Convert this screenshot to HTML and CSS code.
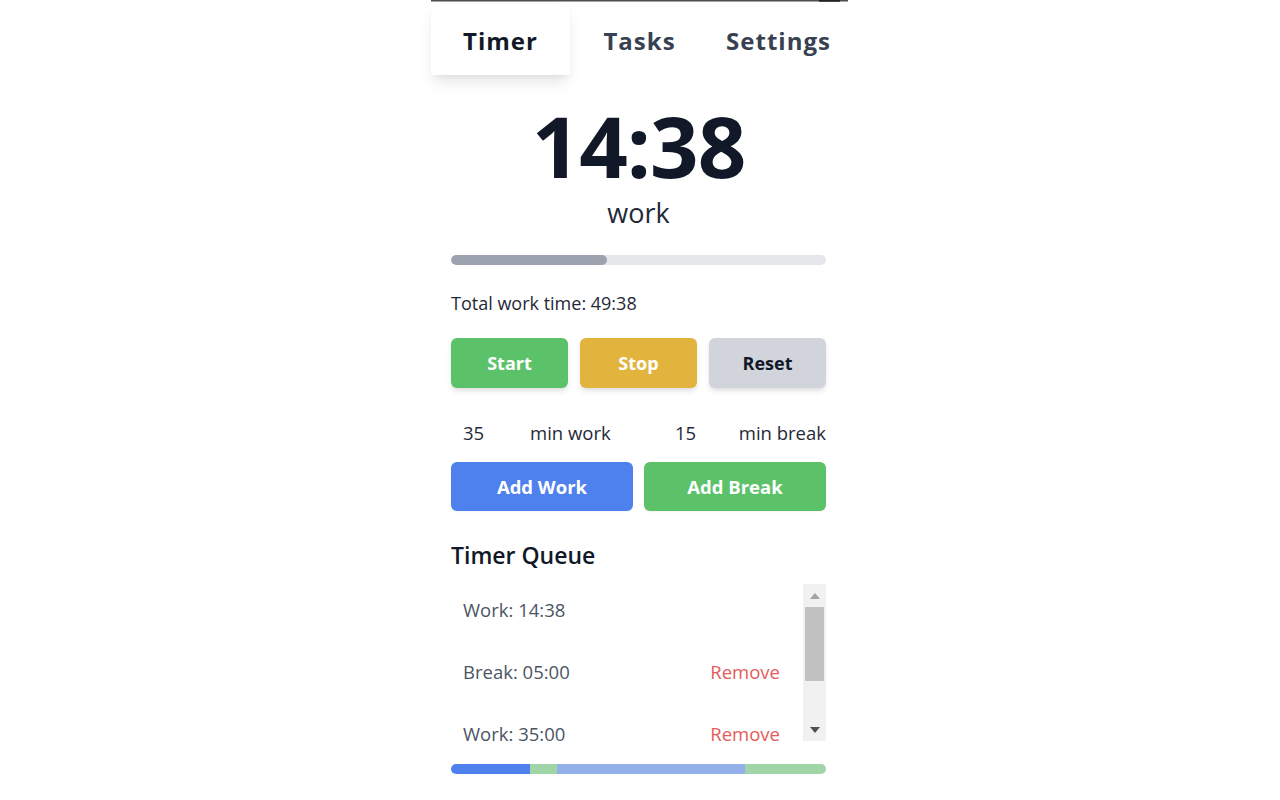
FILE: index.html
```html
<!DOCTYPE html>
<html lang="en">
<head>
<meta charset="utf-8">
<title>Pomodoro Timer</title>
<link rel="stylesheet" href="styles.css">
</head>
<body>
<div class="panel">
  <div class="topline"></div>
  <nav class="tabs">
    <div class="tab active">Timer</div>
    <div class="tab">Tasks</div>
    <div class="tab">Settings</div>
  </nav>
  <main class="content">
    <div class="clock">14:38</div>
    <div class="mode">work</div>
    <div class="progress"><div class="progress-fill" style="width:41.6%"></div></div>
    <div class="total">Total work time: 49:38</div>
    <div class="controls">
      <button class="btn btn-start">Start</button>
      <button class="btn btn-stop">Stop</button>
      <button class="btn btn-reset">Reset</button>
    </div>
    <div class="durations">
      <input class="num" type="number" value="35">
      <span class="dlabel">min work</span>
      <input class="num" type="number" value="15">
      <span class="dlabel">min break</span>
    </div>
    <div class="adds">
      <button class="btn btn-add btn-work">Add Work</button>
      <button class="btn btn-add btn-break">Add Break</button>
    </div>
    <h2 class="queue-title">Timer Queue</h2>
    <div class="queue">
      <ul class="queue-list">
        <li class="qitem"><span>Work: 14:38</span></li>
        <li class="qitem"><span>Break: 05:00</span><span class="remove">Remove</span></li>
        <li class="qitem"><span>Work: 35:00</span><span class="remove">Remove</span></li>
        <li class="qitem"><span>Break: 15:00</span><span class="remove">Remove</span></li>
      </ul>
      <div class="scrollbar">
        <svg class="arrow" width="10" height="6" viewBox="0 0 10 6"><path d="M0 6 L5 0 L10 6 Z" fill="#a3a3a3"/></svg>
        <div class="thumb"></div>
        <div class="track-rest"></div>
        <svg class="arrow" width="10" height="6" viewBox="0 0 10 6"><path d="M0 0 L10 0 L5 6 Z" fill="#505050"/></svg>
      </div>
    </div>
    <div class="segbar">
      <div class="seg seg-cur" style="width:21%"></div>
      <div class="seg seg-break" style="width:7.2%"></div>
      <div class="seg seg-work" style="width:50.3%"></div>
      <div class="seg seg-break" style="flex:1"></div>
    </div>
  </main>
</div>
</body>
</html>
```
FILE: styles.css
```css
* { box-sizing: border-box; }
html, body { margin: 0; padding: 0; background: #ffffff; }
body {
  font-family: "Open Sans", "Noto Sans", sans-serif;
  color: #1f2937;
}
.panel {
  width: 417px;
  margin-left: calc(50% - 209px);
  min-height: 800px;
}
.topline {
  height: 2px;
  background:
    linear-gradient(to right, transparent 0 93%, rgba(0,0,0,0.55) 93% 98%, transparent 98%),
    linear-gradient(to bottom, #4e4e4e 0 1px, #a2a2a2 1px 2px);
}
.tabs {
  display: grid;
  grid-template-columns: repeat(3, 1fr);
  height: 73px;
}
.tab {
  display: flex;
  align-items: center;
  justify-content: center;
  padding-top: 4px;
  font-weight: 700;
  font-size: 24px;
  letter-spacing: 1px;
  color: #374151;
}
.tab.active {
  color: #111827;
  background: #fff;
  box-shadow: 0 10px 15px -3px rgba(0,0,0,0.1), 0 4px 6px -2px rgba(0,0,0,0.05);
}
.content {
  padding: 0 22px 0 20px;
  display: flex;
  flex-direction: column;
}
.clock {
  text-align: center;
  font-size: 85px;
  font-weight: 700;
  line-height: 100px;
  height: 100px;
  color: #111827;
  margin-top: 20px;
  letter-spacing: -1px;
}
.mode {
  text-align: center;
  font-size: 27px;
  line-height: 36px;
  color: #1f2937;
}
.progress {
  height: 10px;
  border-radius: 9999px;
  background: #e5e7eb;
  margin-top: 24px;
  overflow: hidden;
}
.progress-fill {
  height: 100%;
  background: #9ca3af;
  border-radius: 9999px;
}
.total {
  font-size: 18px;
  line-height: 28px;
  color: #1f2937;
  margin-top: 24px;
}
.controls {
  display: grid;
  grid-template-columns: repeat(3, 1fr);
  gap: 12px;
  margin-top: 21px;
}
.btn {
  font-family: inherit;
  border: none;
  border-radius: 6px;
  height: 50px;
  font-size: 18px;
  font-weight: 700;
  color: #ffffff;
  cursor: pointer;
}
.controls .btn {
  box-shadow: 0 4px 6px -1px rgba(0,0,0,0.1), 0 2px 4px -1px rgba(0,0,0,0.06);
}
.btn-start { background: #5cc26a; }
.btn-stop { background: #e2b43e; }
.btn-reset { background: #d1d5db; color: #111827; }
.durations {
  display: grid;
  grid-template-columns: 79px 133px 1fr auto;
  align-items: center;
  margin-top: 30px;
  height: 28px;
}
.num {
  font-family: inherit;
  font-size: 18.5px;
  color: #1f2937;
  border: none;
  outline: none;
  background: transparent;
  width: 60px;
  padding: 0 0 0 12px;
  -moz-appearance: textfield;
  appearance: textfield;
}
.num::-webkit-outer-spin-button,
.num::-webkit-inner-spin-button { -webkit-appearance: none; margin: 0; }
.dlabel { font-size: 18.5px; color: #1f2937; white-space: nowrap; }
.adds {
  display: grid;
  grid-template-columns: 1fr 1fr;
  gap: 11px;
  margin-top: 16px;
}
.btn-add { font-size: 18.5px; height: 49px; box-shadow: 0 1px 2px rgba(0,0,0,0.05); }
.btn-work { background: #4f81ee; }
.btn-break { background: #5cc26a; }
.queue-title {
  font-size: 23px;
  font-weight: 600;
  color: #111827;
  margin: 27px 0 0;
  line-height: 34px;
}
.queue {
  display: flex;
  height: 157px;
  margin-top: 12px;
  overflow: hidden;
}
.queue-list {
  flex: 1;
  list-style: none;
  margin: -1px 0 0;
  padding: 0;
  overflow: hidden;
}
.qitem {
  display: flex;
  justify-content: space-between;
  align-items: center;
  height: 54px;
  margin-bottom: 8px;
  padding: 0 23px 0 12px;
  font-size: 18.5px;
  line-height: 26px;
  color: #4b5563;
}
.remove { color: #e35b5b; }
.scrollbar {
  width: 23px;
  background: #f1f1f1;
  display: flex;
  flex-direction: column;
  align-items: center;
}
.arrow { flex: none; margin: 9px 0 8px; }
.arrow:last-child { margin: 0 0 8px; }
.thumb {
  width: 19px;
  height: 74px;
  background: #c1c1c1;
  flex: none;
}
.track-rest { flex: 1; }
.segbar {
  display: flex;
  height: 10px;
  border-radius: 9999px;
  overflow: hidden;
  margin-top: 23px;
}
.seg { height: 100%; }
.seg-cur { background: #4f81ee; }
.seg-break { background: #a0d5a8; }
.seg-work { background: #94b0ea; }
```
